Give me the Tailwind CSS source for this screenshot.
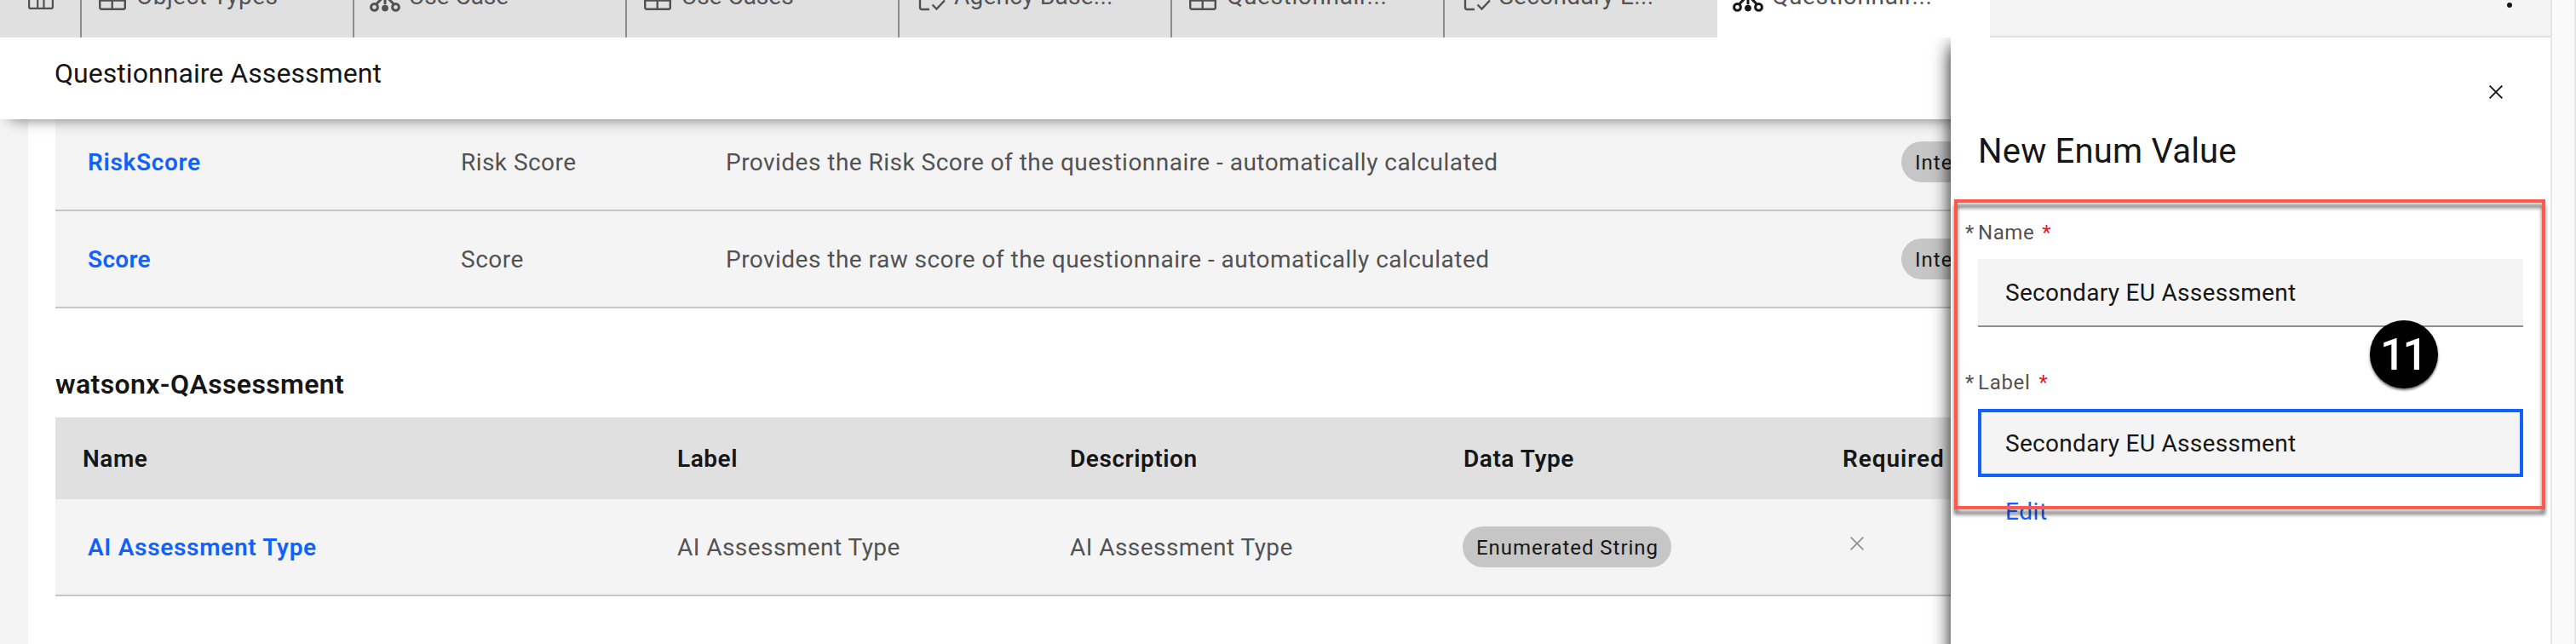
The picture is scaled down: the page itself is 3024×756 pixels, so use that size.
<!DOCTYPE html>
<html lang="en">
<head>
<meta charset="utf-8">
<title>Questionnaire Assessment</title>
<script src="https://cdn.jsdelivr.net/npm/@tailwindcss/browser@4"></script>
</head>
<body class="bg-white">
<svg class="hidden">
  <symbol id="grid" viewBox="0 0 32 32" fill="none" stroke="currentColor" stroke-width="2.4"><rect x="1.2" y="1.2" width="29.6" height="29.6" rx="2"/><path d="M1 10.5h30M1 20.6h30M15.7 10v21"/></symbol>
  <symbol id="tree" viewBox="0 0 36 36" fill="none" stroke="currentColor" stroke-width="3"><circle cx="18" cy="8" r="4.5"/><path d="M18 12v15M17 17.500L8 26.500M19 17.500L28 26.500"/><circle cx="5.500" cy="30.400" r="3.900"/><circle cx="30.500" cy="30.400" r="3.900"/><circle cx="18" cy="31.500" r="3.500" fill="currentColor" stroke-width="1"/></symbol>
  <symbol id="task" viewBox="0 0 36 36" fill="none" stroke="currentColor" stroke-width="2.4"><path d="M15 33H6a2 2 0 0 1-2-2V5a2 2 0 0 1 2-2h18a2 2 0 0 1 2 2v10M18.500 27.500l5 5L33 22.500"/></symbol>
</svg>
<div class="flex w-[3024px] h-[756px] overflow-hidden font-[Roboto,sans-serif] text-[28px] text-[#525252] whitespace-nowrap">
  <div class="w-[2994px] shrink-0 flex flex-col">
    <!-- tab strip -->
    <nav class="h-[44px] shrink-0 flex overflow-hidden bg-[#f4f4f4]">
      <div class="w-[94px] h-[96px] -mt-[52px] shrink-0 bg-[#e0e0e0] flex items-center pl-[33px]">
        <svg class="w-[30px] h-[30px]" viewBox="0 0 30 30" fill="none" stroke="currentColor" stroke-width="2.200"><rect x="1.100" y="1.100" width="27.800" height="27.800" rx="2"/><path d="M1 9h28M11.200 9v20M18.500 9v20"/></svg>
      </div>
      <div class="w-[320px] h-[96px] -mt-[52px] shrink-0 bg-[#e0e0e0] border-l-2 border-[#8d8d8d] flex items-center pl-5"><svg class="w-8 h-8 mr-3"><use href="#grid"/></svg><span class="tracking-[0.47px]">Object Types</span></div>
      <div class="w-[320px] h-[96px] -mt-[52px] shrink-0 bg-[#e0e0e0] border-l-2 border-[#8d8d8d] flex items-center pl-[18px]"><svg class="w-9 h-9 mr-[10px]"><use href="#tree"/></svg><span>Use Case</span></div>
      <div class="w-[320px] h-[96px] -mt-[52px] shrink-0 bg-[#e0e0e0] border-l-2 border-[#8d8d8d] flex items-center pl-5"><svg class="w-8 h-8 mr-3"><use href="#grid"/></svg><span>Use Cases</span></div>
      <div class="w-[320px] h-[96px] -mt-[52px] shrink-0 bg-[#e0e0e0] border-l-2 border-[#8d8d8d] flex items-center pl-5"><svg class="w-9 h-9 mr-2"><use href="#task"/></svg><span class="tracking-[0.24px]">Agency Base...</span></div>
      <div class="w-[320px] h-[96px] -mt-[52px] shrink-0 bg-[#e0e0e0] border-l-2 border-[#8d8d8d] flex items-center pl-5"><svg class="w-8 h-8 mr-3"><use href="#grid"/></svg><span class="tracking-[0.65px]">Questionnair...</span></div>
      <div class="w-[322px] h-[96px] -mt-[52px] shrink-0 bg-[#e0e0e0] border-l-2 border-[#8d8d8d] flex items-center pl-5"><svg class="w-9 h-9 mr-2"><use href="#task"/></svg><span class="tracking-[0.35px]">Secondary E...</span></div>
      <div class="w-[320px] h-[96px] -mt-[52px] shrink-0 bg-white flex items-center pl-[18px]"><svg class="w-9 h-9 mr-[10px] text-[#161616]"><use href="#tree"/></svg><span class="tracking-[0.65px]">Questionnair...</span></div>
      <div class="flex-1 border-b-2 border-[#e0e0e0] flex justify-end pr-[45px] pt-[3px]"><span class="w-[6px] h-[6px] rounded-full bg-[#161616]"></span></div>
    </nav>

    <div class="relative flex-1 overflow-hidden flex flex-col">
      <header class="relative z-10 h-[96px] shrink-0 bg-white flex items-center pl-[64px] pb-[13px] text-[32px] text-[#161616] tracking-[0.05px] shadow-[0_12px_16px_-12px_rgba(0,0,0,0.55)]">Questionnaire Assessment</header>

      <div class="flex-1 flex">
        <div class="w-[33px] shrink-0 bg-[#f4f4f4]"></div>
        <main class="flex-1 pl-8">
          <div class="-mt-[6px]">
            <div class="h-[114px] bg-[#f4f4f4] border-b-2 border-[#c6c6c6] grid grid-cols-[476px_311px_1380px_1fr] items-center">
              <span class="pt-[2px] pl-[38px] font-semibold text-[#0f62fe] tracking-[0.68px]">RiskScore</span>
              <span class="pt-[2px] tracking-[0.45px]">Risk Score</span>
              <span class="pt-[2px] tracking-[0.47px]">Provides the Risk Score of the questionnaire - automatically calculated</span>
              <span class="w-[116px] h-12 rounded-full bg-[#c6c6c6] text-[#161616] text-2xl tracking-[1px] flex items-center pt-px pl-4">Integer</span>
            </div>
            <div class="h-[114px] bg-[#f4f4f4] border-b-2 border-[#c6c6c6] grid grid-cols-[476px_311px_1380px_1fr] items-center">
              <span class="pt-[2px] pl-[38px] font-semibold text-[#0f62fe] tracking-[0.3px]">Score</span>
              <span class="pt-[2px] tracking-[0.5px]">Score</span>
              <span class="pt-[2px] tracking-[0.47px]">Provides the raw score of the questionnaire - automatically calculated</span>
              <span class="w-[116px] h-12 rounded-full bg-[#c6c6c6] text-[#161616] text-2xl tracking-[1px] flex items-center pt-px pl-4">Integer</span>
            </div>
          </div>
          <h2 class="mt-[69px] mb-[19px] h-10 leading-10 text-[32px] font-semibold text-[#161616] tracking-[0.38px]">watsonx-QAssessment</h2>
          <div class="h-[96px] bg-[#e0e0e0] text-[#161616] font-semibold grid grid-cols-[730px_461px_462px_445px_1fr] items-center tracking-[0.56px]">
            <span class="pt-px pl-[32px]">Name</span><span class="pt-px">Label</span><span class="pt-px">Description</span><span class="pt-px">Data Type</span><span class="pt-px tracking-[0.93px]">Required</span>
          </div>
          <div class="h-[114px] bg-[#f4f4f4] border-b-2 border-[#c6c6c6] grid grid-cols-[730px_461px_461px_446px_1fr] items-center tracking-[0.45px]">
            <span class="pt-[2px] pl-[38px] font-semibold text-[#0f62fe] tracking-[0.68px]">AI Assessment Type</span>
            <span class="pt-[2px]">AI Assessment Type</span>
            <span class="pt-[2px]">AI Assessment Type</span>
            <span class="w-[245px] h-12 rounded-full bg-[#c6c6c6] text-[#161616] text-2xl tracking-[0.97px] flex items-center pt-px pl-4">Enumerated String</span>
            <span class="pl-[9px] pb-2"><svg class="w-4 h-4" viewBox="0 0 16 16" stroke="#8d8d8d" stroke-width="1.600"><path d="M.6.6l14.800 14.800M15.400.6L.6 15.400"/></svg></span>
          </div>
        </main>
      </div>

      <!-- side panel -->
      <aside class="absolute z-20 top-0 right-0 w-[704px] h-[760px] bg-white px-8 pt-[56px] shadow-[0_10px_20px_rgba(0,0,0,0.95)]">
        <div class="flex justify-end pr-6"><svg class="w-4 h-4" viewBox="0 0 16 16" stroke="#161616" stroke-width="1.900"><path d="M.6.6l14.800 14.800M15.400.6L.6 15.400"/></svg></div>
        <h1 class="mt-[38px] h-12 leading-[48px] text-[40px] text-[#161616] tracking-[0.2px]">New Enum Value</h1>
        <label class="mt-[55px] -ml-[15px] h-8 flex items-center text-2xl"><span class="w-[15px]">*</span><span class="tracking-[0.59px]">Name</span><span class="ml-[9px] text-[#da1e28]">*</span></label>
        <div class="mt-[15px] h-20 bg-[#f4f4f4] border-b-2 border-[#8d8d8d] flex items-center pt-[2px] pl-8 text-[#161616] tracking-[0.3px]">Secondary EU Assessment</div>
        <label class="mt-[49px] -ml-[15px] h-8 flex items-center text-2xl"><span class="w-[15px]">*</span><span class="tracking-[0.7px]">Label</span><span class="ml-[10px] text-[#da1e28]">*</span></label>
        <div class="mt-[15px] h-20 bg-[#f4f4f4] border-4 border-[#0f62fe] flex items-center pt-px pl-7 text-[#161616] tracking-[0.3px]">Secondary EU Assessment</div>
        <div class="mt-[25px] h-8 leading-8 pl-8 text-[#0f62fe] tracking-[0.58px]">Edit</div>
        <!-- callout frame and step marker -->
        <div class="absolute left-[4px] top-[190px] w-[694px] h-[364px] border-4 border-[#ff594b] [filter:drop-shadow(0_6px_2px_rgba(0,0,0,0.55))]"></div>
        <div class="absolute left-[492px] top-[332px] size-20 rounded-full bg-black shadow-[0_2px_3px_rgba(0,0,0,0.6)] flex items-center justify-center pr-[3px] pt-px font-medium text-[52px] tracking-[-3px] text-white">11</div>
      </aside>
    </div>
  </div>
  <div class="flex-1 bg-[#fafafa] border-x-2 border-[#e6e6e6]"></div>
</div>
</body>
</html>
